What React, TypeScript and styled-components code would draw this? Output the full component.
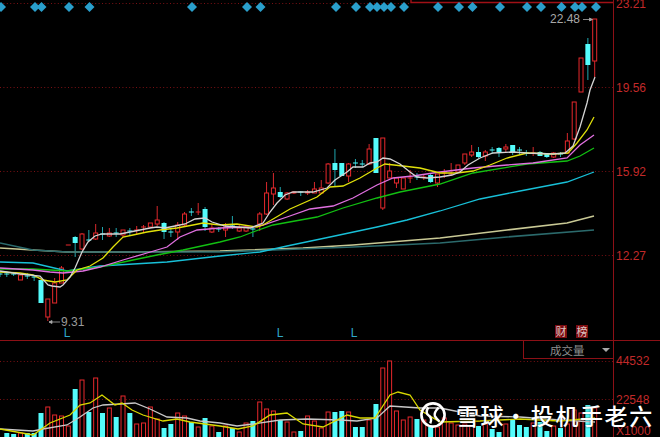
import { createGlobalStyle, styled } from "styled-components";

const RED = "#e8282c";
const CYAN = "#54fcfc";
const AXIS_RED = "#8c1016";
const LABEL_RED = "#c22a2a";

const GlobalStyle = createGlobalStyle`
  html, body {
    margin: 0;
    padding: 0;
    background: #000;
  }
`;

const Screen = styled.div`
  width: 660px;
  height: 437px;
  position: relative;
  overflow: hidden;
  background: #000;
  display: flex;
  flex-direction: column;
  font-family: "Liberation Sans", Arial, sans-serif;
`;

const PricePane = styled.div`
  height: 340px;
  display: flex;
  border-bottom: 1px solid ${AXIS_RED};
`;

const VolumePane = styled.div`
  flex: 1;
  display: flex;
  position: relative;
  min-height: 0;
`;

const Plot = styled.svg`
  width: 613px;
  height: 100%;
  display: block;
  flex: none;
`;

const PriceAxis = styled.div`
  width: 46px;
  border-left: 1px solid ${AXIS_RED};
  display: flex;
  flex-direction: column;
  gap: 70px;
  padding-left: 2px;
  margin-top: 0;
  overflow: hidden;
`;

const VolumeAxis = styled(PriceAxis)`
  gap: 25px;
  padding-top: 13px;
`;

const AxisLabel = styled.div<{ $pull?: number }>`
  height: 14px;
  line-height: 14px;
  font-size: 12px;
  color: ${LABEL_RED};
  margin-top: ${({ $pull }) => $pull ?? 0}px;
`;

const IndicatorSelect = styled.div`
  position: absolute;
  top: 0;
  left: 523px;
  width: 90px;
  height: 18px;
  box-sizing: border-box;
  border-left: 1px solid ${AXIS_RED};
  border-bottom: 1px solid ${AXIS_RED};
  display: flex;
  align-items: center;
  padding: 0 3px 0 26px;
  justify-content: space-between;
  color: #8e8e8e;
  font-family: "Noto Sans CJK SC", sans-serif;
  font-size: 11.5px;
`;

const Caret = styled.span`
  width: 0;
  height: 0;
  border-left: 4px solid transparent;
  border-right: 4px solid transparent;
  border-top: 4px solid #a8a8a8;
`;

const Watermark = styled.div`
  position: absolute;
  left: 419px;
  top: 401px;
  display: flex;
  align-items: center;
  gap: 9px;
  color: #fff;
  font-family: "Noto Sans CJK SC", sans-serif;
  font-size: 23px;
  font-weight: 500;
  letter-spacing: 1.6px;
  line-height: 28px;
  white-space: nowrap;
  text-shadow: 0 0 2px rgba(0, 0, 0, 0.7);
`;

const WatermarkDot = styled.span`
  margin: 0 2px 0 -1px;
`;

// candles: up?, high, top, bottom, low (in pixels of the picture)
type Candle = [0 | 1, number, number, number, number];

const candles: Candle[] = [
  [0, 271, 274, 274, 277],
  [0, 271, 274, 274, 277],
  [0, 272, 274, 274, 276],
  [1, 274, 275, 280, 280],
  [0, 273, 276, 276, 279],
  [0, 276, 277, 277, 281],
  [0, 280, 280, 303, 303],
  [1, 299, 299, 317, 321],
  [1, 278, 283, 303, 303],
  [1, 266, 268, 283, 283],
  [1, 245, 245, 245, 245],
  [0, 236, 237, 243, 257],
  [1, 233, 234, 249, 250],
  [0, 230, 240, 240, 241],
  [1, 224, 233, 239, 240],
  [0, 227, 234, 234, 240],
  [1, 228, 233, 236, 237],
  [0, 228, 233, 233, 237],
  [1, 230, 230, 235, 237],
  [0, 228, 231, 231, 235],
  [1, 226, 230, 230, 235],
  [1, 225, 227, 227, 232],
  [1, 223, 223, 227, 228],
  [1, 206, 220, 224, 226],
  [0, 222, 223, 232, 239],
  [0, 228, 232, 232, 237],
  [1, 222, 225, 232, 240],
  [1, 212, 214, 225, 226],
  [0, 208, 212, 212, 216],
  [1, 203, 212, 212, 215],
  [0, 207, 209, 227, 231],
  [1, 224, 228, 232, 233],
  [0, 227, 229, 229, 232],
  [1, 223, 227, 230, 237],
  [0, 216, 225, 225, 229],
  [1, 224, 228, 231, 232],
  [1, 226, 227, 231, 232],
  [0, 226, 229, 229, 237],
  [1, 212, 214, 224, 231],
  [1, 182, 193, 214, 215],
  [1, 173, 188, 194, 205],
  [0, 187, 192, 197, 198],
  [1, 192, 193, 199, 200],
  [1, 192, 192, 193, 194],
  [0, 191, 192, 192, 196],
  [1, 190, 192, 193, 195],
  [1, 182, 189, 193, 193],
  [1, 180, 188, 193, 193],
  [1, 163, 164, 183, 184],
  [0, 149, 163, 170, 187],
  [0, 163, 163, 176, 176],
  [1, 163, 164, 176, 182],
  [0, 159, 163, 163, 168],
  [0, 160, 164, 164, 167],
  [1, 144, 149, 164, 165],
  [0, 138, 138, 173, 173],
  [1, 138, 138, 208, 210],
  [1, 163, 171, 178, 178],
  [1, 177, 178, 183, 188],
  [1, 178, 178, 189, 189],
  [1, 170, 178, 178, 183],
  [0, 173, 177, 177, 180],
  [1, 175, 177, 177, 180],
  [0, 173, 175, 182, 183],
  [1, 174, 174, 183, 187],
  [1, 169, 173, 173, 178],
  [1, 163, 174, 174, 176],
  [1, 165, 165, 172, 173],
  [1, 154, 154, 163, 165],
  [1, 145, 152, 155, 157],
  [0, 147, 152, 157, 158],
  [1, 150, 152, 156, 161],
  [0, 147, 150, 150, 154],
  [0, 147, 148, 152, 157],
  [1, 144, 147, 149, 153],
  [0, 145, 145, 152, 155],
  [0, 147, 150, 150, 155],
  [0, 150, 153, 153, 156],
  [1, 147, 153, 153, 156],
  [0, 151, 152, 156, 156],
  [0, 154, 154, 157, 158],
  [1, 152, 153, 157, 158],
  [0, 152, 154, 154, 157],
  [1, 133, 141, 153, 154],
  [1, 102, 102, 139, 140],
  [1, 58, 58, 92, 92],
  [0, 38, 44, 65, 80],
  [1, 19, 19, 61, 77],
];

const volumeTops = [
  437, 433, 434, 433, 433, 433, 413, 407, 415, 416, 426, 389, 380, 412, 378, 413,
  408, 417, 396, 413, 424, 423, 407, 419, 428, 424, 413, 416, 422, 427, 418, 426,
  432, 426, 428, 432, 423, 421, 402, 409, 411, 420, 422, 432, 431, 416, 421, 428,
  412, 412, 411, 412, 427, 427, 420, 404, 368, 361, 411, 420, 417, 419, 420, 427,
  427, 418, 423, 425, 424, 426, 426, 424, 429, 432, 424, 420, 425, 427, 423, 422,
  431, 426, 428, 424, 410, 413, 405, 408,
];

const candleX = (n: number) => 594.7 - 6.836 * (87 - n);

type Line = { color: string; width?: number; points: number[][] };

const priceLines: Line[] = [
  {
    color: "#c9c995",
    width: 1.6,
    points: [[0, 248], [33, 250], [67, 252], [133, 252], [220, 251], [303, 248], [353, 245], [440, 238], [507, 230], [567, 223], [594, 216]],
  },
  {
    color: "#2b6a6c",
    width: 1.6,
    points: [[0, 243], [33, 250], [67, 252], [133, 252], [220, 252], [353, 247], [440, 243], [507, 237], [594, 230]],
  },
  {
    color: "#18c0d8",
    width: 1.3,
    points: [[0, 262], [33, 263], [67, 271], [100, 266], [167, 262], [220, 256], [260, 252], [287, 246], [330, 237], [377, 227], [407, 220], [440, 211], [480, 199], [520, 191], [567, 182], [594, 172]],
  },
  {
    color: "#12c012",
    width: 1.3,
    points: [[0, 269], [33, 269], [67, 271], [100, 267], [133, 260], [157, 255], [183, 250], [220, 242], [240, 237], [253, 232], [273, 225], [317, 217], [343, 208], [377, 198], [400, 192], [440, 184], [473, 173], [527, 164], [567, 161], [580, 156], [594, 148]],
  },
  {
    color: "#e070e0",
    width: 1.3,
    points: [[0, 268], [33, 270], [50, 272], [63, 273], [83, 271], [100, 267], [123, 260], [147, 253], [167, 247], [180, 237], [197, 230], [220, 228], [253, 227], [263, 225], [287, 217], [310, 209], [333, 206], [353, 198], [377, 185], [393, 178], [413, 176], [440, 172], [473, 168], [507, 165], [533, 163], [567, 158], [580, 145], [594, 135]],
  },
  {
    color: "#e0e00a",
    width: 1.3,
    points: [[0, 272], [20, 273], [33, 275], [43, 280], [55, 282], [67, 280], [77, 270], [90, 266], [103, 258], [113, 247], [123, 237], [133, 235], [147, 232], [160, 230], [177, 228], [193, 225], [203, 223], [220, 225], [237, 224], [257, 227], [263, 225], [290, 209], [317, 197], [330, 187], [343, 186], [360, 178], [377, 168], [385, 164], [403, 166], [420, 168], [440, 173], [457, 173], [473, 171], [490, 165], [507, 158], [527, 153], [553, 154], [568, 153], [577, 143], [587, 130], [594, 117]],
  },
  {
    color: "#d4d4d4",
    width: 1.3,
    points: [[0, 271], [20, 274], [40, 276], [48, 285], [52, 286], [60, 287], [63, 285], [70, 277], [75, 268], [82, 252], [88, 242], [95, 236], [102, 234], [120, 234], [135, 231], [150, 228], [157, 227], [165, 228], [175, 226], [185, 224], [195, 219], [205, 218], [212, 222], [225, 226], [250, 228], [263, 223], [270, 212], [277, 203], [285, 195], [293, 192], [313, 192], [327, 188], [335, 180], [347, 172], [353, 167], [363, 167], [370, 163], [377, 162], [383, 158], [390, 159], [400, 164], [410, 172], [417, 177], [427, 178], [440, 177], [452, 175], [460, 172], [468, 165], [480, 158], [493, 153], [513, 152], [527, 153], [553, 154], [565, 153], [573, 146], [580, 127], [587, 103], [590, 90], [595, 77]],
  },
];

const volumeLines: Line[] = [
  {
    color: "#c8c8c8",
    width: 1.3,
    points: [[0, 429], [33, 431], [43, 429], [67, 425], [80, 417], [93, 408], [103, 405], [120, 404], [135, 403], [150, 409], [167, 417], [187, 418], [200, 421], [220, 423], [237, 426], [253, 424], [280, 420], [307, 419], [340, 420], [357, 421], [377, 418], [390, 406], [420, 408], [440, 408], [480, 416], [520, 417], [560, 420], [595, 422]],
  },
  {
    color: "#d8d800",
    width: 1.3,
    points: [[0, 429], [33, 435], [50, 423], [70, 415], [80, 405], [90, 403], [102, 395], [115, 405], [122, 403], [132, 410], [143, 415], [163, 421], [177, 419], [190, 422], [220, 426], [238, 429], [253, 426], [270, 415], [287, 413], [303, 424], [323, 427], [347, 415], [360, 418], [375, 418], [390, 395], [398, 392], [410, 395], [420, 410], [440, 422], [480, 421], [520, 419], [560, 421], [595, 418]],
  },
];

const toPoints = (points: number[][]) => points.map((p) => p.join(",")).join(" ");

const MaLines = ({ lines }: { lines: Line[] }) => (
  <>
    {lines.map((line) => (
      <polyline
        key={line.color}
        points={toPoints(line.points)}
        fill="none"
        stroke={line.color}
        strokeWidth={line.width ?? 1}
      />
    ))}
  </>
);

const GridLine = ({ y, x2 = 613 }: { y: number; x2?: number }) => (
  <line x1={0} x2={x2} y1={y} y2={y} stroke="#7a1014" strokeDasharray="1 2.4" />
);

const signalX = [
  1, 35, 41.5, 69, 89.5, 192, 247, 260.5, 336, 356, 370, 377, 384, 391, 404, 438,
  459, 472.5, 500, 527, 541, 561.5, 575, 582, 596,
];

const CandleMark = ({ candle, n }: { candle: Candle; n: number }) => {
  const [up, high, top, bottom, low] = candle;
  const x = candleX(n);
  const wick = up ? "#d8282c" : "#1fa6ae";
  const isFlat = bottom - top < 1;
  return (
    <g>
      <line x1={x} x2={x} y1={high} y2={top} stroke={wick} />
      <line x1={x} x2={x} y1={bottom} y2={low} stroke={wick} />
      {isFlat ? (
        <line x1={x - 2.5} x2={x + 2.5} y1={top} y2={top} stroke={up ? RED : CYAN} />
      ) : up ? (
        <rect x={x - 2} y={top} width={4} height={bottom - top} fill="#000" stroke={RED} />
      ) : (
        <rect x={x - 2.5} y={top} width={5} height={bottom - top} fill={CYAN} />
      )}
    </g>
  );
};

const VolumeBar = ({ n, top }: { n: number; top: number }) => {
  const x = candleX(n);
  return candles[n][0] ? (
    <rect x={x - 2} y={top} width={4} height={440 - top} fill="#000" stroke={RED} />
  ) : (
    <rect x={x - 2.5} y={top} width={5} height={440 - top} fill={CYAN} />
  );
};

const Tag = ({ x, label }: { x: number; label: string }) => (
  <g>
    <rect x={x} y={325} width={12} height={13} fill="#7c0c10" />
    <text
      x={x + 6}
      y={336}
      fill="#dcc4c4"
      fontSize={11}
      textAnchor="middle"
      fontFamily='"Noto Sans CJK SC", sans-serif'
    >
      {label}
    </text>
  </g>
);

const LowMark = ({ x }: { x: number }) => (
  <text x={x} y={337} fill="#2fa8cc" fontSize={12} textAnchor="middle" fontFamily='"Liberation Sans", sans-serif'>
    L
  </text>
);

const PriceChart = () => (
  <Plot viewBox="0 0 613 340">
    <line x1={0} x2={411} y1={3.5} y2={3.5} stroke="#7a1014" strokeDasharray="1 2.4" />
    <path d="M411 0V2.5H613" fill="none" stroke="#a01016" strokeWidth={1.4} />
    <GridLine y={87.5} />
    <GridLine y={171.5} />
    <GridLine y={255.5} />
    {signalX.map((x) => (
      <polygon key={x} points={`${x - 5},7 ${x},2 ${x + 5},7 ${x},12`} fill="#2a9fcc" />
    ))}
    {candles.map((candle, n) => (
      <CandleMark key={n} candle={candle} n={n} />
    ))}
    <MaLines lines={priceLines} />
    <text x={550} y={23} fill="#a8a8a8" fontSize={12} fontFamily='"Liberation Sans", sans-serif'>
      22.48
    </text>
    <path d="M583 19.5H592M589.5 18V21L592.5 19.5Z" fill="#a8a8a8" stroke="#a8a8a8" strokeWidth={0.8} />
    <path d="M49 322H60M52 320.5V323.5L49 322Z" fill="#a8a8a8" stroke="#a8a8a8" strokeWidth={0.8} />
    <text x={61} y={326} fill="#9a9a9a" fontSize={12} fontFamily='"Liberation Sans", sans-serif'>
      9.31
    </text>
    <LowMark x={67} />
    <LowMark x={280} />
    <LowMark x={354} />
    <Tag x={555} label="财" />
    <Tag x={576} label="榜" />
  </Plot>
);

const VolumeChart = () => (
  <Plot viewBox="0 341 613 96">
    <GridLine y={361.5} />
    <GridLine y={399.5} />
    {volumeTops.map((top, n) => (
      <VolumeBar key={n} n={n} top={top} />
    ))}
    <MaLines lines={volumeLines} />
  </Plot>
);

const WatermarkLogo = () => (
  <svg width="28" height="28" viewBox="0 0 30 30">
    <circle cx="15" cy="15" r="12.4" fill="none" stroke="#fff" strokeWidth="2.8" />
    <path d="M10 7C7 11 8 14 11 16C13 18 14 20 12 24" fill="none" stroke="#fff" strokeWidth="2.6" />
    <path d="M21 7C18 10 16 13 17 16C18 18 20 20 22 22" fill="none" stroke="#fff" strokeWidth="2.6" />
  </svg>
);

export default function App() {
  return (
    <Screen>
      <GlobalStyle />
      <PricePane>
        <PriceChart />
        <PriceAxis>
          <AxisLabel $pull={-3}>23.21</AxisLabel>
          <AxisLabel>19.56</AxisLabel>
          <AxisLabel>15.92</AxisLabel>
          <AxisLabel>12.27</AxisLabel>
        </PriceAxis>
      </PricePane>
      <VolumePane>
        <VolumeChart />
        <IndicatorSelect>
          成交量
          <Caret />
        </IndicatorSelect>
        <VolumeAxis>
          <AxisLabel>44532</AxisLabel>
          <AxisLabel>22548</AxisLabel>
          <AxisLabel $pull={-8}>X1000</AxisLabel>
        </VolumeAxis>
      </VolumePane>
      <Watermark>
        <WatermarkLogo />
        <span>
          雪球
          <WatermarkDot>·</WatermarkDot>
          投机手老六
        </span>
      </Watermark>
    </Screen>
  );
}
